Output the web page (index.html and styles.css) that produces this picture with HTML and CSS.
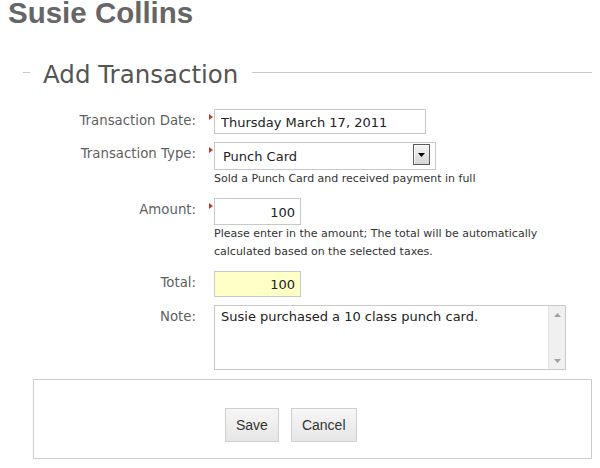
FILE: index.html
```html
<!DOCTYPE html>
<html>
<head>
<meta charset="utf-8">
<link rel="stylesheet" href="styles.css">
</head>
<body>
<div class="page">
  <h1 class="name">Susie Collins</h1>
  <section class="section">
    <div class="legend">
      <span class="legend-line short"></span>
      <h2 class="legend-text">Add Transaction</h2>
      <span class="legend-line long"></span>
    </div>
    <div class="form">
      <label class="label">Transaction Date:</label>
      <div class="field">
        <span class="req"></span>
        <input class="input date" type="text" value="Thursday March 17, 2011">
      </div>

      <label class="label">Transaction Type:</label>
      <div class="field">
        <span class="req"></span>
        <div class="select-wrap">
          <select class="select"><option>Punch Card</option></select>
          <span class="select-btn">
            <svg width="7" height="4" viewBox="0 0 7 4"><path d="M0 0H7L3.5 4Z" fill="#000"/></svg>
          </span>
        </div>
        <div class="hint">Sold a Punch Card and received payment in full</div>
      </div>

      <label class="label">Amount:</label>
      <div class="field">
        <span class="req"></span>
        <input class="input num" type="text" value="100">
        <div class="hint">Please enter in the amount; The total will be automatically calculated based on the selected taxes.</div>
      </div>

      <label class="label">Total:</label>
      <div class="field">
        <input class="input num total" type="text" value="100" readonly>
      </div>

      <label class="label">Note:</label>
      <div class="field">
        <div class="note-wrap">
          <textarea class="note">Susie purchased a 10 class punch card.</textarea>
          <span class="scrollbar">
            <svg class="arrow-up" width="7" height="4" viewBox="0 0 7 4"><path d="M0 4H7L3.5 0Z" fill="#a0a0a0"/></svg>
            <svg class="arrow-down" width="7" height="4" viewBox="0 0 7 4"><path d="M0 0H7L3.5 4Z" fill="#a0a0a0"/></svg>
          </span>
        </div>
      </div>
    </div>
    <div class="actions">
      <button class="btn" type="button">Save</button>
      <button class="btn" type="button">Cancel</button>
    </div>
  </section>
</div>
</body>
</html>
```
FILE: styles.css
```css
html, body {
  margin: 0;
  padding: 0;
  background: #fff;
}
.page {
  padding: 0 8px;
}
.name {
  margin: 1px 0 0;
  font-family: "Liberation Sans", Arial, sans-serif;
  font-weight: bold;
  font-size: 29.5px;
  line-height: 24px;
  color: #666;
}
.section {
  margin: 36px 0 0 15px;
}
.legend {
  display: flex;
  align-items: flex-start;
}
.legend-line {
  display: block;
  height: 1px;
  background: #c8c8c8;
  margin-top: 11px;
}
.legend-line.short {
  width: 7px;
}
.legend-line.long {
  flex: 1;
}
.legend-text {
  margin: 0;
  padding: 0 14px 0 13px;
  font-family: "DejaVu Sans", sans-serif;
  font-weight: normal;
  font-size: 24.5px;
  line-height: 28px;
  color: #555;
}
.form {
  display: grid;
  grid-template-columns: 173px 352px;
  column-gap: 18px;
  row-gap: 8px;
  margin-top: 20px;
}
.label {
  text-align: right;
  font-family: "DejaVu Sans", sans-serif;
  font-size: 13.3px;
  line-height: 18px;
  padding-top: 3px;
  color: #5f5f5f;
}
.field {
  position: relative;
}
.req {
  position: absolute;
  left: -5px;
  top: 5px;
  width: 0;
  height: 0;
  border-top: 3px solid transparent;
  border-bottom: 3px solid transparent;
  border-left: 4px solid #c0392b;
}
.input {
  display: block;
  box-sizing: border-box;
  margin: 0;
  border: 1px solid #c8c8c8;
  background: #fff;
  font-family: "DejaVu Sans", sans-serif;
  font-size: 13px;
  color: #222;
  outline: none;
}
.date {
  width: 212px;
  height: 25px;
  padding: 2px 6px 0;
}
.num {
  width: 87px;
  height: 27px;
  padding: 1px 5px 0;
  text-align: right;
}
.total {
  height: 26px;
  background: #ffffc8;
}
.select-wrap {
  position: relative;
  width: 222px;
  height: 28px;
}
.select {
  display: block;
  box-sizing: border-box;
  width: 222px;
  height: 28px;
  margin: 0;
  padding: 1px 0 0 8px;
  border: 1px solid #c8c8c8;
  border-radius: 0;
  background: #fff;
  -webkit-appearance: none;
  appearance: none;
  font-family: "DejaVu Sans", sans-serif;
  font-size: 13px;
  color: #222;
  outline: none;
}
.select-btn {
  position: absolute;
  left: 199px;
  top: 2px;
  box-sizing: border-box;
  width: 17px;
  height: 21px;
  border: 1px solid #5a5a5a;
  box-shadow: inset 1px 1px 0 #fff;
  background: linear-gradient(#f6f6f6, #d6d6d6);
  display: flex;
  align-items: center;
  justify-content: center;
}
.hint {
  font-family: "DejaVu Sans", sans-serif;
  font-size: 11px;
  line-height: 18px;
  color: #333;
  margin-bottom: 2px;
}
.note-wrap {
  position: relative;
  width: 352px;
  height: 65px;
}
.note {
  display: block;
  box-sizing: border-box;
  width: 352px;
  height: 65px;
  margin: 0;
  padding: 2px 24px 0 6px;
  border: 1px solid #c8c8c8;
  resize: none;
  overflow: hidden;
  font-family: "DejaVu Sans", sans-serif;
  font-size: 13px;
  line-height: 18px;
  color: #222;
  outline: none;
}
.scrollbar {
  position: absolute;
  right: 1px;
  top: 1px;
  bottom: 1px;
  width: 17px;
  background: #f0f0f0;
  border-left: 1px solid #e4e4e4;
  box-sizing: border-box;
}
.arrow-up {
  position: absolute;
  left: 5px;
  top: 7px;
}
.arrow-down {
  position: absolute;
  left: 5px;
  bottom: 6px;
}
.actions {
  box-sizing: border-box;
  margin: 9px 0 0 10px;
  height: 80px;
  border: 1px solid #cccccc;
  padding: 28px 0 0 191px;
  display: flex;
  align-items: flex-start;
  gap: 12px;
}
.btn {
  height: 34px;
  margin: 0;
  padding: 0 10px;
  border: 1px solid #cfcfcf;
  border-radius: 0;
  background: linear-gradient(#f6f6f6, #e6e6e6);
  font-family: "Liberation Sans", Arial, sans-serif;
  font-size: 14px;
  color: #333;
}
```
